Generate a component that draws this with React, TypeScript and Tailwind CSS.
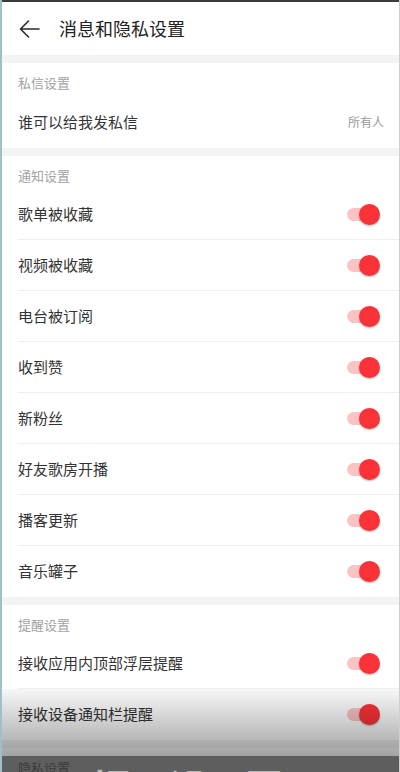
import React from 'react'

const font = { fontFamily: '"Noto Sans CJK SC", "Noto Sans", sans-serif' }

function Toggle() {
    return (
        <div className="relative h-[21px] w-[33px]">
            <div className="absolute left-0 top-[4px] h-[13px] w-[26px] rounded-full bg-[#fcc3c5]" />
            <div className="absolute right-0 top-0 h-[21px] w-[21px] rounded-full bg-[#fb3237] shadow-[0_1px_2px_rgba(0,0,0,0.3)]" />
        </div>
    )
}

function SectionTitle({ children }: { children: React.ReactNode }) {
    return <div className="h-[33px] pl-[16px] pt-[10px] text-[13px] leading-[20px] text-[#a3a3a3]">{children}</div>
}

function Gap() {
    return <div className="h-[8px] bg-[#f3f3f3]" />
}

function SwitchRow({ label, last }: { label: string; last?: boolean }) {
    return (
        <div className={`ml-[16px] flex h-[51px] items-center justify-between pr-[19px] ${last ? '' : 'border-b border-[#efefef]'}`}>
            <span className="text-[15px] text-[#333]">{label}</span>
            <Toggle />
        </div>
    )
}

const notify = ['歌单被收藏', '视频被收藏', '电台被订阅', '收到赞', '新粉丝', '好友歌房开播', '播客更新', '音乐罐子']

export default function App() {
    return (
        <div style={font} className="relative h-[772px] w-[400px] overflow-hidden border-l-2 border-r border-l-[#9fbfca] border-r-[#cfcfcf] bg-white">
            <div className="h-[2px] bg-[#3b3b3b]" />
            <header className="flex h-[53px] items-center">
                <svg className="ml-[17px] h-[20px] w-[21px]" viewBox="0 0 21 20" fill="none" stroke="#2a2a2a" strokeWidth="1.6" strokeLinecap="round" strokeLinejoin="round">
                    <path d="M20 10H1.5M9.5 2L1.5 10l8 8" />
                </svg>
                <h1 className="ml-[19px] text-[18px] text-[#222]">消息和隐私设置</h1>
            </header>
            <Gap />
            <SectionTitle>私信设置</SectionTitle>
            <div className="flex h-[52px] items-center justify-between pl-[16px] pr-[15px]">
                <span className="text-[15px] text-[#333]">谁可以给我发私信</span>
                <span className="text-[12px] text-[#999]">所有人</span>
            </div>
            <Gap />
            <SectionTitle>通知设置</SectionTitle>
            {notify.map((n, i) => (
                <SwitchRow key={n} label={n} last={i === notify.length - 1} />
            ))}
            <Gap />
            <SectionTitle>提醒设置</SectionTitle>
            <SwitchRow label="接收应用内顶部浮层提醒" />
            <SwitchRow label="接收设备通知栏提醒" last />
            <Gap />
            <SectionTitle>隐私设置</SectionTitle>

            {/* video overlay at the bottom */}
            <div className="pointer-events-none absolute inset-x-0 bottom-0 top-[689px] flex flex-col">
                <div className="flex-1 bg-gradient-to-b from-[rgba(0,0,0,0.03)] to-[rgba(0,0,0,0.36)]" />
                <div className="relative h-[16px] overflow-hidden bg-[rgba(0,0,0,0.63)]">
                    <div className="absolute left-[90px] top-[11px] text-[40px] font-bold leading-[40px] tracking-[36px] text-[#b8b8b8]">
                        提设置
                    </div>
                </div>
            </div>
        </div>
    )
}
